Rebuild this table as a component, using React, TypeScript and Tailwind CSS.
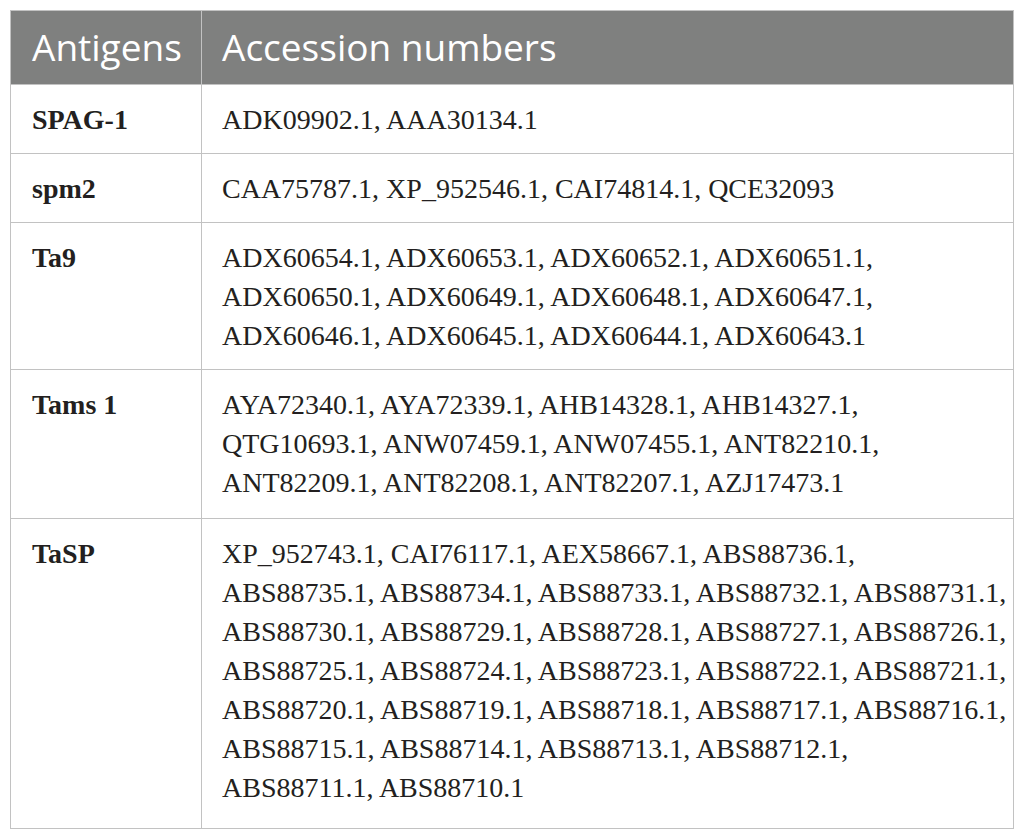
import React from "react";

const rows: { name: string; lines: string[]; pb: string }[] = [
  { name: "SPAG-1", lines: ["ADK09902.1, AAA30134.1"], pb: "pb-[14px]" },
  { name: "spm2", lines: ["CAA75787.1, XP_952546.1, CAI74814.1, QCE32093"], pb: "pb-[14px]" },
  {
    name: "Ta9",
    lines: [
      "ADX60654.1, ADX60653.1, ADX60652.1, ADX60651.1,",
      "ADX60650.1, ADX60649.1, ADX60648.1, ADX60647.1,",
      "ADX60646.1, ADX60645.1, ADX60644.1, ADX60643.1",
    ],
    pb: "pb-[14px]",
  },
  {
    name: "Tams 1",
    lines: [
      "AYA72340.1, AYA72339.1, AHB14328.1, AHB14327.1,",
      "QTG10693.1, ANW07459.1, ANW07455.1, ANT82210.1,",
      "ANT82209.1, ANT82208.1, ANT82207.1, AZJ17473.1",
    ],
    pb: "pb-[16px]",
  },
  {
    name: "TaSP",
    lines: [
      "XP_952743.1, CAI76117.1, AEX58667.1, ABS88736.1,",
      "ABS88735.1, ABS88734.1, ABS88733.1, ABS88732.1, ABS88731.1,",
      "ABS88730.1, ABS88729.1, ABS88728.1, ABS88727.1, ABS88726.1,",
      "ABS88725.1, ABS88724.1, ABS88723.1, ABS88722.1, ABS88721.1,",
      "ABS88720.1, ABS88719.1, ABS88718.1, ABS88717.1, ABS88716.1,",
      "ABS88715.1, ABS88714.1, ABS88713.1, ABS88712.1,",
      "ABS88711.1, ABS88710.1",
    ],
    pb: "pb-[21px]",
  },
];

export default function App() {
  return (
    <div className="min-h-[837px] w-[1025px] bg-white pt-[10px] pl-[10px]">
      <table className="w-[1004px] border-collapse border border-[#c2c2c2] table-fixed">
        <colgroup>
          <col className="w-[191px]" />
          <col />
        </colgroup>
        <thead>
          <tr className="bg-[#7f807f] h-[74px]">
            <th className="border border-[#c2c2c2] pl-[21px] pb-[2px] text-left align-middle font-normal text-white text-[37px] leading-[40px] [font-family:'Open_Sans',sans-serif]">
              Antigens
            </th>
            <th className="border border-[#c2c2c2] pl-[20px] pb-[2px] text-left align-middle font-normal text-white text-[37px] leading-[40px] [font-family:'Open_Sans',sans-serif]">
              Accession numbers
            </th>
          </tr>
        </thead>
        <tbody className="[font-family:'Liberation_Serif',serif] text-[#231f20] text-[28px] leading-[39px]">
          {rows.map((r) => (
            <tr key={r.name}>
              <td className={`border border-[#c2c2c2] pl-[21px] pt-[15px] align-top font-bold ${r.pb}`}>
                {r.name}
              </td>
              <td className={`border border-[#c2c2c2] pl-[20px] pt-[15px] align-top whitespace-nowrap ${r.pb}`}>
                {r.lines.map((l, i) => (
                  <div key={i}>{l}</div>
                ))}
              </td>
            </tr>
          ))}
        </tbody>
      </table>
    </div>
  );
}
